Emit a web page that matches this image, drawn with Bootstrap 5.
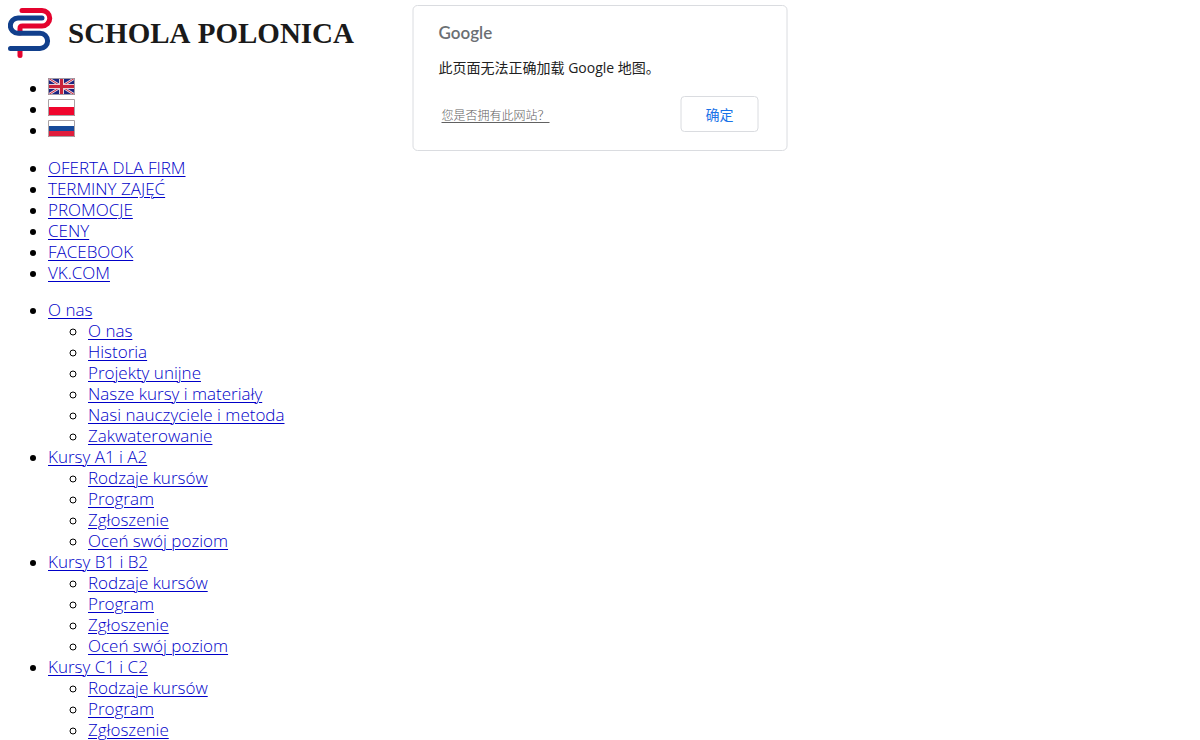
<!DOCTYPE html>
<html lang="pl">
<head>
<meta charset="utf-8">
<meta name="viewport" content="width=device-width, initial-scale=1">
<title>Schola Polonica</title>
<link href="https://cdn.jsdelivr.net/npm/bootstrap@5.3.0/dist/css/bootstrap.min.css" rel="stylesheet">
<style>
  body { font: 16px/21px "Open Sans", "Noto Sans", sans-serif; color: #000; background: #fff; padding: 8px 8px 0; }
  a { color: #0000c8; text-underline-offset: 2px; text-decoration-thickness: 1px; }
  .brand { height: 54px; gap: 15px; color: #1a1a1a; font: bold 29px/50px "Liberation Serif", serif; font-kerning: none; }
  .menu { padding-left: 40px; margin-bottom: 16px; }
  .menu li { min-height: 21px; }
  .menu a { font-size: 17px; font-weight: 340; line-height: 20px; }
  .flags { margin-bottom: 17px; }
  .flags a { display: block; width: 27px; height: 21px; }
  .flags svg { display: block; }
  .map-alert { top: 5px; width: 375px; border: 1px solid #dadce0; border-radius: 5px; padding: 16px 28px 18px 25px; font-family: "Open Sans", "Noto Sans CJK SC", sans-serif; font-size: 14px; }
  .map-logo { font: 600 17px/22px Lato, sans-serif; color: #6b6f73; }
  .map-text { color: #212121; margin: 13px 0 18px; }
  .owner { color: #616161; font: 300 12px/18px "Noto Sans CJK SC", sans-serif; padding: 2px 0 0 3px; }
  .ok { width: 78px; height: 36px; border: 1px solid #dadce0; border-radius: 4px; padding: 0; font: 14px/20px "Noto Sans CJK SC", sans-serif; color: #1a73e8; }
</style>
</head>
<body>
<header class="brand d-flex align-items-start">
  <svg width="45" height="51" viewBox="0 0 45 51" fill="none" stroke-width="5" stroke-linecap="round" stroke-linejoin="round" aria-hidden="true">
    <path stroke="#e4032e" d="M14 2.500H34A7.700 7.700 0 0 1 34 18H14.500Q12 18 12 20.500V25"/>
    <path stroke="#e4032e" d="M12 41V47.500"/>
    <path stroke="#113f8c" d="M34 10H10A7.600 7.600 0 0 0 10 25.300H32A7.600 7.600 0 0 1 32 40.500H2.500"/>
  </svg>
  <span>SCHOLA POLONICA</span>
</header>
<main>
  <ul class="menu flags mt-3">
    <li><a href="#en" aria-label="English"><svg width="27" height="17" viewBox="0 0 27 17"><path fill="#1b2480" d="M0 0h27v17H0z"/><path stroke="#e8dce6" stroke-width="2.500" d="M0 0l27 17M27 0L0 17"/><path stroke="#d22a3c" stroke-width="1" d="M0 0l27 17M27 0L0 17"/><path stroke="#e8d0d6" stroke-width="5" d="M13.500 0v17M0 8.500h27"/><path stroke="#c8233a" stroke-width="3" d="M13.500 0v17M0 8.500h27"/><path fill="none" stroke="#a09aa5" d="M.5.5h26v16H.5z"/></svg></a></li>
    <li><a href="#pl" aria-label="Polski"><svg width="27" height="17" viewBox="0 0 27 17"><path fill="#fff" d="M0 0h27v8H0z"/><path fill="#f0052d" d="M0 8h27v9H0z"/><path fill="none" stroke="#aaa2a5" d="M.5.5h26v16H.5z"/></svg></a></li>
    <li><a href="#ru" aria-label="Русский"><svg width="27" height="17" viewBox="0 0 27 17"><path fill="#fff" d="M0 0h27v6H0z"/><path fill="#164a9a" d="M0 6h27v5H0z"/><path fill="#e01d3c" d="M0 11h27v6H0z"/><path fill="none" stroke="#aaa2a5" d="M.5.5h26v16H.5z"/></svg></a></li>
  </ul>
  <ul class="menu">
    <li><a href="#firmy">OFERTA DLA FIRM</a></li>
    <li><a href="#terminy">TERMINY ZAJĘĆ</a></li>
    <li><a href="#promocje">PROMOCJE</a></li>
    <li><a href="#ceny">CENY</a></li>
    <li><a href="#facebook">FACEBOOK</a></li>
    <li><a href="#vk">VK.COM</a></li>
  </ul>
  <ul class="menu mb-0">
    <li><a href="#o-nas">O nas</a>
      <ul class="menu mb-0">
        <li><a href="#szkola">O nas</a></li>
        <li><a href="#historia">Historia</a></li>
        <li><a href="#projekty">Projekty unijne</a></li>
        <li><a href="#materialy">Nasze kursy i materiały</a></li>
        <li><a href="#metoda">Nasi nauczyciele i metoda</a></li>
        <li><a href="#zakwaterowanie">Zakwaterowanie</a></li>
      </ul>
    </li>
    <li><a href="#a">Kursy A1 i A2</a>
      <ul class="menu mb-0">
        <li><a href="#a-rodzaje">Rodzaje kursów</a></li>
        <li><a href="#a-program">Program</a></li>
        <li><a href="#a-zgloszenie">Zgłoszenie</a></li>
        <li><a href="#a-poziom">Oceń swój poziom</a></li>
      </ul>
    </li>
    <li><a href="#b">Kursy B1 i B2</a>
      <ul class="menu mb-0">
        <li><a href="#b-rodzaje">Rodzaje kursów</a></li>
        <li><a href="#b-program">Program</a></li>
        <li><a href="#b-zgloszenie">Zgłoszenie</a></li>
        <li><a href="#b-poziom">Oceń swój poziom</a></li>
      </ul>
    </li>
    <li><a href="#c">Kursy C1 i C2</a>
      <ul class="menu mb-0">
        <li><a href="#c-rodzaje">Rodzaje kursów</a></li>
        <li><a href="#c-program">Program</a></li>
        <li><a href="#c-zgloszenie">Zgłoszenie</a></li>
      </ul>
    </li>
  </ul>
</main>
<div class="map-alert position-absolute start-50 translate-middle-x bg-white" role="dialog" aria-label="Google" lang="zh-CN">
  <div class="map-logo">Google</div>
  <p class="map-text">此页面无法正确加载 Google 地图。</p>
  <div class="d-flex justify-content-between align-items-center">
    <a class="owner" href="#owner">您是否拥有此网站？</a>
    <button class="ok btn" type="button">确定</button>
  </div>
</div>
<script src="https://cdn.jsdelivr.net/npm/bootstrap@5.3.0/dist/js/bootstrap.bundle.min.js"></script>
</body>
</html>
